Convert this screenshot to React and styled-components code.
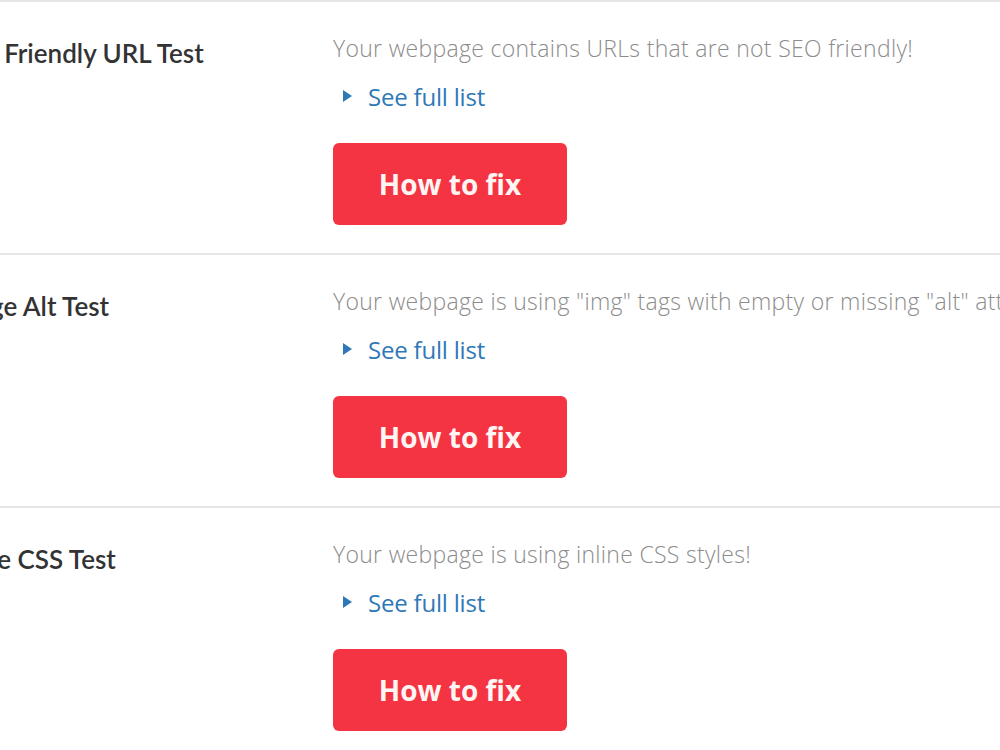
import React from 'react';
import styled, { createGlobalStyle } from 'styled-components';

const GlobalStyle = createGlobalStyle`
    html, body {
        margin: 0;
        padding: 0;
        background: #ffffff;
        overflow: hidden;
    }
    body {
        font-family: "Open Sans", "Liberation Sans", sans-serif;
    }
`

const Page = styled.div`
    width: 1500px;
    margin-left: -52px;
`

const Row = styled.div`
    display: flex;
    border-top: 2px solid #e6e6e6;
    padding: 31px 0 28px;
`

const TitleCol = styled.div`
    width: 385px;
    flex-shrink: 0;
    padding-top: 5px;
`

const Title = styled.h3`
    margin: 0;
    font-family: "Lato", "Open Sans", sans-serif;
    font-weight: 600;
    font-size: 26px;
    line-height: 30px;
    color: #333333;
    white-space: nowrap;
`

const Body = styled.div`
    display: flex;
    flex-direction: column;
    align-items: flex-start;
`

const Desc = styled.p`
    margin: 0;
    font-size: 23px;
    font-weight: 300;
    line-height: 30px;
    color: #8c8c8c;
    white-space: nowrap;
    letter-spacing: 0.3px;
`

const Toggle = styled.div`
    display: flex;
    align-items: center;
    margin-top: 18px;
    padding-left: 10px;
    height: 30px;
    color: #2f78b7;
    font-size: 24px;
    font-weight: 400;
    letter-spacing: -0.2px;
    cursor: pointer;
`

const Arrow = styled.span`
    width: 0;
    height: 0;
    border-top: 6px solid transparent;
    border-bottom: 6px solid transparent;
    border-left: 9px solid #2f78b7;
    margin-right: 16px;
`

const FixButton = styled.button`
    margin-top: 32px;
    width: 234px;
    height: 82px;
    border: none;
    border-radius: 6px;
    background: #f53443;
    color: #fff6f4;
    font-family: "Open Sans", "Liberation Sans", sans-serif;
    font-weight: 700;
    font-size: 28px;
    cursor: pointer;
`

const tests = [
    { title: 'SEO Friendly URL Test', text: 'Your webpage contains URLs that are not SEO friendly!' },
    { title: 'Image Alt Test', text: 'Your webpage is using "img" tags with empty or missing "alt" attribute!' },
    { title: 'Inline CSS Test', text: 'Your webpage is using inline CSS styles!' },
]

function App() {
    return (
        <>
            <GlobalStyle />
            <Page>
                {tests.map(test => (
                    <Row key={test.title}>
                        <TitleCol>
                            <Title>{test.title}</Title>
                        </TitleCol>
                        <Body>
                            <Desc>{test.text}</Desc>
                            <Toggle><Arrow />See full list</Toggle>
                            <FixButton>How to fix</FixButton>
                        </Body>
                    </Row>
                ))}
            </Page>
        </>
    );
}

export default App;
